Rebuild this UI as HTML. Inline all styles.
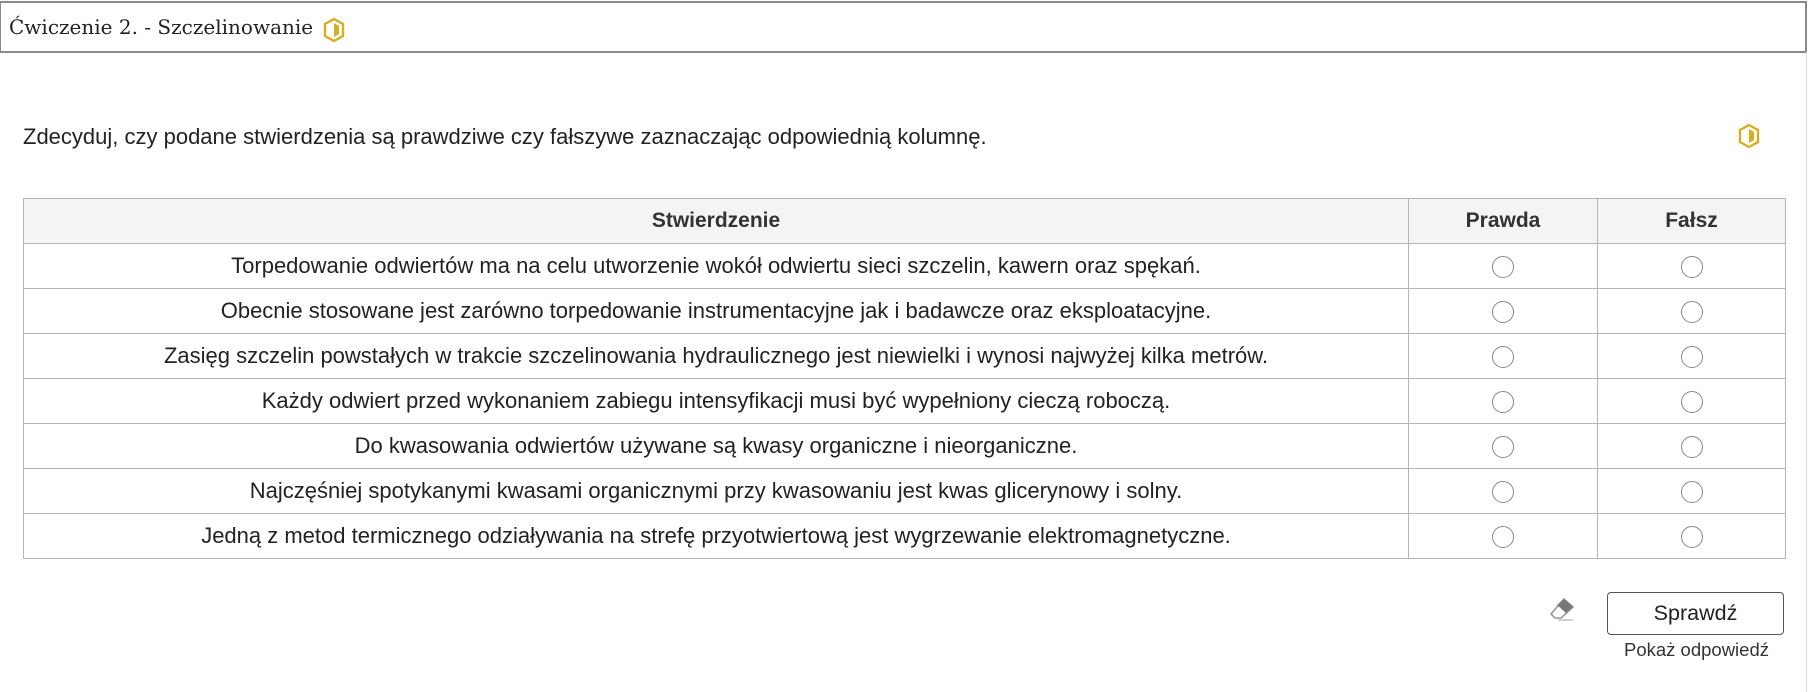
<!DOCTYPE html>
<html><head><meta charset="utf-8">
<style>
html,body{margin:0;padding:0;background:#fff;}
body{width:1811px;height:691px;position:relative;overflow:hidden;font-family:"Liberation Sans",Arial,sans-serif;color:#222;}
.hdr{position:absolute;left:0;top:1px;width:1807px;border:1px solid #8a8a8a;border-width:2px 2px 2px 1px;box-sizing:border-box;height:52px;}
.hdr span{position:absolute;left:8px;top:12px;font-family:"DejaVu Serif","Liberation Serif",serif;font-size:20px;color:#222;}
.vline{position:absolute;left:1806px;top:52px;width:1px;height:640px;background:#ddd;}
.instr{position:absolute;left:23px;top:124px;font-size:22px;color:#222;}
table{position:absolute;left:23px;top:198px;border-collapse:collapse;width:1763px;}
td,th{border:1px solid #b5b5b5;height:44px;padding:0;text-align:center;font-size:22px;color:#222;}
th{background:#f4f4f4;font-weight:bold;color:#333;font-size:21px;}
.r{display:inline-block;width:22px;height:22px;border:1px solid #888;border-radius:50%;box-sizing:border-box;vertical-align:middle;}
.btn{position:absolute;left:1607px;top:592px;width:177px;height:43px;border:1px solid #555;border-radius:4px;box-sizing:border-box;text-align:center;line-height:41px;font-size:21.5px;color:#222;}
.pk{position:absolute;left:1598px;top:639px;width:197px;text-align:center;font-size:18.5px;color:#333;}
</style></head><body>
<div class="hdr"><span>Ćwiczenie 2. - Szczelinowanie</span>
<svg style="position:absolute;left:322px;top:14px" width="22" height="26" viewBox="0 0 22 26"><polygon points="11,2 20,7 20,19 11,24 2,19 2,7" fill="none" stroke="#d4b020" stroke-width="2.4"/><path d="M11,6 L16,9 L16,17 L11,20 Z" fill="#d4b020"/></svg>
</div>
<div class="vline"></div>
<div class="instr">Zdecyduj, czy podane stwierdzenia są prawdziwe czy fałszywe zaznaczając odpowiednią kolumnę.</div>
<svg style="position:absolute;left:1738px;top:123px" width="22" height="26" viewBox="0 0 22 26"><polygon points="11,2 20,7 20,19 11,24 2,19 2,7" fill="none" stroke="#d4b020" stroke-width="2.4"/><path d="M11,6 L16,9 L16,17 L11,20 Z" fill="#d4b020"/></svg>
<table>
<tr><th style="width:1384px">Stwierdzenie</th><th style="width:188px">Prawda</th><th>Fałsz</th></tr>
<tr><td>Torpedowanie odwiertów ma na celu utworzenie wokół odwiertu sieci szczelin, kawern oraz spękań.</td><td><span class="r"></span></td><td><span class="r"></span></td></tr>
<tr><td>Obecnie stosowane jest zarówno torpedowanie instrumentacyjne jak i badawcze oraz eksploatacyjne.</td><td><span class="r"></span></td><td><span class="r"></span></td></tr>
<tr><td>Zasięg szczelin powstałych w trakcie szczelinowania hydraulicznego jest niewielki i wynosi najwyżej kilka metrów.</td><td><span class="r"></span></td><td><span class="r"></span></td></tr>
<tr><td>Każdy odwiert przed wykonaniem zabiegu intensyfikacji musi być wypełniony cieczą roboczą.</td><td><span class="r"></span></td><td><span class="r"></span></td></tr>
<tr><td>Do kwasowania odwiertów używane są kwasy organiczne i nieorganiczne.</td><td><span class="r"></span></td><td><span class="r"></span></td></tr>
<tr><td>Najczęśniej spotykanymi kwasami organicznymi przy kwasowaniu jest kwas glicerynowy i solny.</td><td><span class="r"></span></td><td><span class="r"></span></td></tr>
<tr><td>Jedną z metod termicznego odziaływania na strefę przyotwiertową jest wygrzewanie elektromagnetyczne.</td><td><span class="r"></span></td><td><span class="r"></span></td></tr>
</table>
<svg style="position:absolute;left:1548px;top:597px" width="30" height="26" viewBox="0 0 30 26"><path d="M16,2 L25,10 L13,21 L7,21 L3,17 Z" fill="none" stroke="#999" stroke-width="1.6"/><path d="M16,2 L25,10 L18,16 L9,8 Z" fill="#777"/><line x1="10" y1="23" x2="25" y2="23" stroke="#ccc" stroke-width="1.8"/></svg>
<div class="btn">Sprawdź</div>
<div class="pk">Pokaż odpowiedź</div>
</body></html>
